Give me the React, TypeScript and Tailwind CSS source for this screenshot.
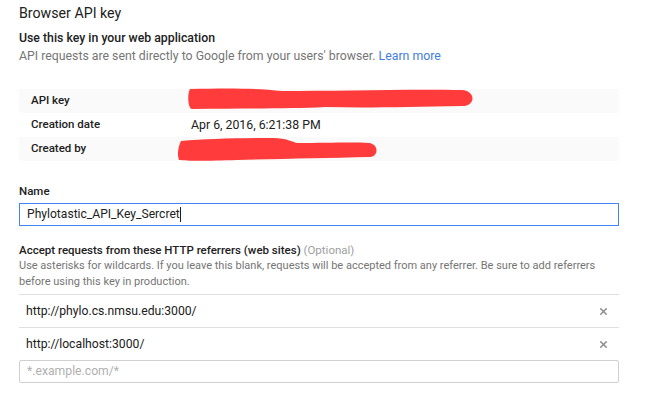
import { X } from 'lucide-react'

function Scribble({ d, w, h }: { d: string; w: number; h: number }) {
  return (
    <svg width={w} height={h} viewBox={`0 0 ${w} ${h}`} className="absolute">
      <path d={d} fill="#ff3b3b" />
    </svg>
  )
}

const referrers = ['http://phylo.cs.nmsu.edu:3000/', 'http://localhost:3000/']

export default function App() {
  return (
    <div className="min-h-screen bg-white font-['Roboto',sans-serif] text-[#212121]">
      <div className="w-[600px] ml-[19px] pt-[3px]">
        <h1 className="text-[14.2px] leading-[20px] text-[#212121]">Browser API key</h1>

        <div className="mt-[6px]">
          <div className="text-[12.3px] leading-[18px] font-medium">Use this key in your web application</div>
          <p className="text-[12.3px] leading-[18px] text-[#757575]">
            API requests are sent directly to Google from your users' browser.{' '}
            <a className="text-[#3f7de0]">Learn more</a>
          </p>
        </div>

        <div className="mt-[24px] text-[11.5px]">
          <div className="relative flex items-center h-6 bg-[#fafafa]">
            <span className="w-[172px] pl-3 font-medium">API key</span>
            <div className="relative h-6 flex-1">
              <div className="absolute left-[-5px] top-[-3px]">
                <Scribble
                  w={290}
                  h={24}
                  d="M4 3 C40 2 70 2 96 5 C150 5 220 3 276 4 C290 5 290 20 276 20 C220 21 180 22 140 21 C100 23 60 22 6 23 C2 23 1 8 4 3 Z"
                />
              </div>
            </div>
          </div>
          <div className="flex items-center h-6">
            <span className="w-[172px] pl-3 font-medium">Creation date</span>
            <span className="text-[12.3px]">Apr 6, 2016, 6:21:38 PM</span>
          </div>
          <div className="relative flex items-center h-6 bg-[#fafafa]">
            <span className="w-[172px] pl-3 font-medium">Created by</span>
            <div className="relative h-6 flex-1">
              <div className="absolute left-[-14px] top-[-4px]">
                <Scribble
                  w={202}
                  h={28}
                  d="M4 8 C30 6 60 5 96 5 C110 5 115 9 120 10 C150 10 175 9 192 10 C202 11 202 24 192 24 C150 25 100 26 60 27 C30 28 10 28 2 27 C0 22 1 14 4 8 Z"
                />
              </div>
            </div>
          </div>
        </div>

        <div className="mt-[22px]">
          <label className="block text-[11.5px] leading-[16px] font-medium">Name</label>
          <div className="mt-[4px] h-[23px] border border-[#4285f4] flex items-center pl-[7px] text-[12.1px]">
            Phylotastic_API_Key_Sercret
            <span className="inline-block w-px h-[15px] bg-[#212121]" />
          </div>
        </div>

        <div className="mt-[16px]">
          <div className="text-[11.5px] leading-[16px] font-medium">
            Accept requests from these HTTP referrers (web sites){' '}
            <span className="font-normal text-[#9e9e9e]">(Optional)</span>
          </div>
          <p className="text-[11px] leading-[16px] text-[#757575]">
            Use asterisks for wildcards. If you leave this blank, requests will be accepted from any referrer. Be sure to add referrers
            before using this key in production.
          </p>
        </div>

        <div className="mt-[4px]">
          {referrers.map((r) => (
            <div key={r} className="flex items-center h-[33px] border-t border-[#e0e0e0] pl-[7px] pr-[10px] text-[12.2px]">
              <span className="flex-1">{r}</span>
              <X size={11} strokeWidth={3} className="text-[#8a8a8a]" />
            </div>
          ))}
          <div className="h-[23px] border border-[#d0d0d0] rounded-[2px] flex items-center pl-[7px] text-[12.2px] text-[#b0b0b0]">
            *.example.com/*
          </div>
        </div>
      </div>
    </div>
  )
}
